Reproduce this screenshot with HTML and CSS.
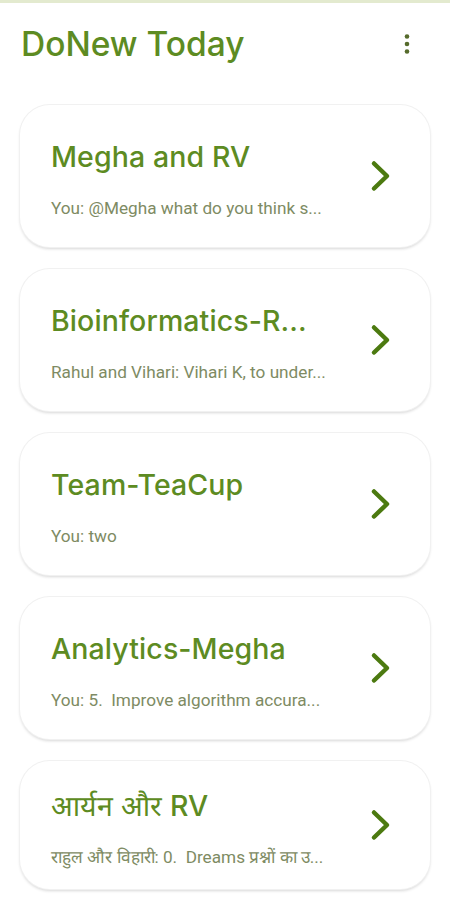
FILE: index.html
```html
<!DOCTYPE html>
<html lang="en">
<head>
<meta charset="utf-8">
<title>DoNew Today</title>
<link rel="stylesheet" href="styles.css">
</head>
<body>
<div class="app">
  <div class="topline"></div>
  <header class="appbar">
    <h1 class="apptitle">DoNew Today</h1>
    <button class="menu" aria-label="More options">
      <svg width="8" height="24" viewBox="0 0 8 24"><circle cx="4" cy="4.5" r="2.3"/><circle cx="4" cy="12" r="2.3"/><circle cx="4" cy="19.5" r="2.3"/></svg>
    </button>
  </header>
  <main class="list">
    <div class="card">
      <div class="text">
        <div class="title">Megha and RV</div>
        <div class="sub">You: @Megha what do you think s...</div>
      </div>
      <svg class="chev" width="22" height="32" viewBox="0 0 22 32"><polyline points="4,3.5 17,16 4,28.5"/></svg>
    </div>
    <div class="card">
      <div class="text">
        <div class="title">Bioinformatics-R...</div>
        <div class="sub">Rahul and Vihari: Vihari K, to under...</div>
      </div>
      <svg class="chev" width="22" height="32" viewBox="0 0 22 32"><polyline points="4,3.5 17,16 4,28.5"/></svg>
    </div>
    <div class="card">
      <div class="text">
        <div class="title">Team-TeaCup</div>
        <div class="sub">You: two</div>
      </div>
      <svg class="chev" width="22" height="32" viewBox="0 0 22 32"><polyline points="4,3.5 17,16 4,28.5"/></svg>
    </div>
    <div class="card">
      <div class="text">
        <div class="title">Analytics-Megha</div>
        <div class="sub">You: 5.&nbsp; Improve algorithm accura...</div>
      </div>
      <svg class="chev" width="22" height="32" viewBox="0 0 22 32"><polyline points="4,3.5 17,16 4,28.5"/></svg>
    </div>
    <div class="card card-last">
      <div class="text">
        <div class="title">आर्यन और RV</div>
        <div class="sub">राहुल और विहारी: 0.&nbsp; Dreams प्रश्नों का उ...</div>
      </div>
      <svg class="chev" width="22" height="32" viewBox="0 0 22 32"><polyline points="4,3.5 17,16 4,28.5"/></svg>
    </div>
  </main>
</div>
</body>
</html>
```
FILE: styles.css
```css
html, body {
  margin: 0;
  padding: 0;
  background: #ffffff;
}
body {
  font-family: Inter, "Noto Sans", sans-serif;
  overflow: hidden;
}
.app {
  width: 450px;
  height: 900px;
  overflow: hidden;
}
.topline {
  height: 3px;
  background: #e3eacf;
}
.appbar {
  display: flex;
  align-items: center;
  justify-content: space-between;
  height: 82px;
  padding: 0 39px 0 21px;
}
.apptitle {
  margin: 0;
  font-family: Inter, sans-serif;
  font-weight: 550;
  font-size: 33.5px;
  letter-spacing: 0;
  color: #5d8b22;
}
.menu {
  border: 0;
  background: none;
  padding: 0;
  display: flex;
  fill: #566b2c;
}
.list {
  display: flex;
  flex-direction: column;
  gap: 22px;
  padding: 20px 20px 0 20px;
}
.card {
  flex: none;
  height: 142px;
  box-sizing: border-box;
  border-radius: 30px;
  background: #fff;
  box-shadow: 0 0 0 1px #f1f1f1, 0 2px 3px rgba(0, 0, 0, 0.16);
  display: flex;
  align-items: center;
  padding: 0 38px 0 31px;
}
.card-last {
  height: 128px;
}
.text {
  flex: 1;
  min-width: 0;
  display: flex;
  flex-direction: column;
  gap: 23px;
  padding-top: 6px;
}
.title {
  font-family: Inter, sans-serif;
  font-weight: 550;
  font-size: 28.5px;
  line-height: 34px;
  letter-spacing: 0.1px;
  color: #5d8b22;
  white-space: nowrap;
}
.sub {
  font-family: Roboto, sans-serif;
  font-size: 17.2px;
  line-height: 22px;
  color: #7e8b63;
  white-space: nowrap;
}
.chev {
  flex: none;
  fill: none;
  stroke: #4c7a10;
  stroke-width: 4.5;
  stroke-linecap: round;
  stroke-linejoin: round;
}
```
